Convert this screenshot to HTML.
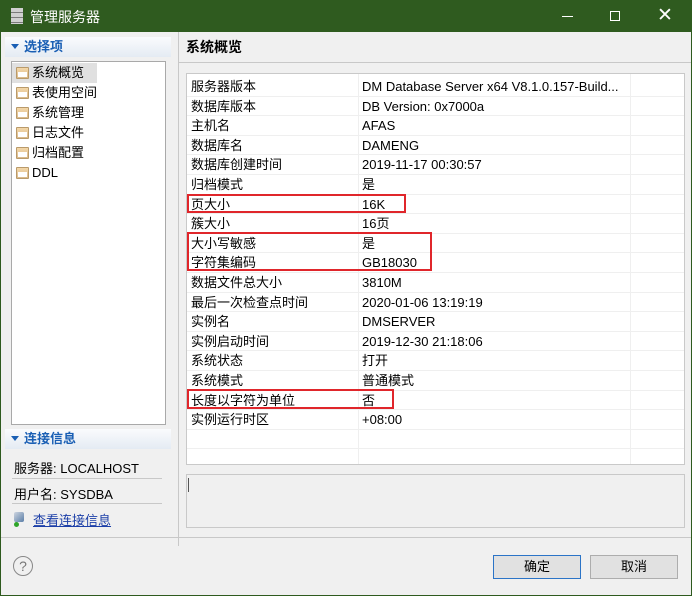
<!DOCTYPE html>
<html><head><meta charset="utf-8"><style>
*{margin:0;padding:0;box-sizing:border-box}
body{width:692px;height:596px;overflow:hidden;background:#f0f0f0;font-family:"Liberation Sans","Noto Sans CJK SC",sans-serif;font-size:13px;color:#000;position:relative}
.a{position:absolute}
.win{left:0;top:0;width:692px;height:596px;border:1px solid #2e5a1e}
.title{left:0;top:0;width:692px;height:32px;background:#2f5b1f;color:#fff}
.hdr{background:linear-gradient(#fafbfd,#e4ebf3);color:#1a5fb4;font-weight:bold;font-size:13px}
.tri{display:inline-block;width:0;height:0;border-left:4px solid transparent;border-right:4px solid transparent;border-top:5px solid #1a5fb4;margin:0 5px 2px 6px}
.list div{height:20px;line-height:20px;padding-left:20px;position:relative}
.ic{position:absolute;left:4px;top:4px;width:13px;height:12px;background:linear-gradient(#f4d7a8,#d9b98a);border:1px solid #b99a6a;border-radius:1px}
.ic:after{content:"";position:absolute;left:1px;top:4px;width:9px;height:5px;background:#fff}
.tbl{left:186px;top:73px;width:499px;height:392px;background:#fff;border:1px solid #c9c9c9}
.row{position:absolute;left:0;width:497px;height:19.6px;border-bottom:1px solid #efefef;line-height:19px}
.row span{position:absolute;left:4px}
.row b{font-weight:normal;position:absolute;left:175px}
.red{position:absolute;border:2px solid #e0262b}
.btn{background:#e1e1e1;border:1px solid #adadad;text-align:center;line-height:22px;font-size:13px}
</style></head><body>
<div class="a title">
 <div class="a" style="left:11px;top:8px;width:12px;height:16px;background:repeating-linear-gradient(#d0d0d0 0 4px,#7a7a7a 4px 5px)"></div>
 <div class="a" style="left:30px;top:7px;font-size:14px">管理服务器</div>
 <div class="a" style="left:562px;top:16px;width:11px;height:1px;background:#fff"></div>
 <div class="a" style="left:610px;top:11px;width:10px;height:10px;border:1px solid #fff"></div>
 <div class="a" style="left:657px;top:4px;font-size:19px;color:#fff">✕</div>
</div>
<div class="a" style="left:0;top:32px;width:1px;height:564px;background:#2e5a1e"></div>
<div class="a" style="left:691px;top:32px;width:1px;height:564px;background:#2e5a1e"></div>
<div class="a" style="left:0;top:595px;width:692px;height:1px;background:#2e5a1e"></div>

<div class="a hdr" style="left:5px;top:37px;width:166px;height:20px;line-height:20px"><span class="tri"></span>选择项</div>
<div class="a list" style="left:11px;top:61px;width:155px;height:364px;background:#fff;border:1px solid #a9a9a9;padding-top:1px">
 <div style="background:#e0e0e0;width:85px"><i class="ic"></i>系统概览</div>
 <div><i class="ic"></i>表使用空间</div>
 <div><i class="ic"></i>系统管理</div>
 <div><i class="ic"></i>日志文件</div>
 <div><i class="ic"></i>归档配置</div>
 <div><i class="ic"></i>DDL</div>
</div>
<div class="a hdr" style="left:5px;top:429px;width:166px;height:20px;line-height:20px"><span class="tri"></span>连接信息</div>
<div class="a" style="left:14px;top:458px">服务器: LOCALHOST</div>
<div class="a" style="left:12px;top:478px;width:150px;height:1px;background:#c8c8c8"></div>
<div class="a" style="left:14px;top:484px">用户名: SYSDBA</div>
<div class="a" style="left:12px;top:503px;width:150px;height:1px;background:#c8c8c8"></div>
<div class="a" style="left:14px;top:512px;width:10px;height:10px;background:linear-gradient(135deg,#cfd6e0,#5a7ea8);border-radius:2px"></div>
<div class="a" style="left:14px;top:522px;width:5px;height:5px;background:#2fa52a;border-radius:50%"></div>
<div class="a" style="left:33px;top:510px;color:#1c3fa8;text-decoration:underline">查看连接信息</div>

<div class="a" style="left:178px;top:32px;width:1px;height:514px;background:#c8c8c8"></div>
<div class="a" style="left:186px;top:37px;font-weight:bold;font-size:14px">系统概览</div>
<div class="a" style="left:179px;top:62px;width:512px;height:1px;background:#c8c8c8"></div>

<div class="a tbl">
 <div class="a" style="left:171px;top:0;width:1px;height:390px;background:#efefef"></div>
 <div class="a" style="left:443px;top:0;width:1px;height:390px;background:#efefef"></div>
 <div class="row" style="top:3px"><span>服务器版本</span><b>DM Database Server x64 V8.1.0.157-Build...</b></div>
 <div class="row" style="top:22.6px"><span>数据库版本</span><b>DB Version: 0x7000a</b></div>
 <div class="row" style="top:42.2px"><span>主机名</span><b>AFAS</b></div>
 <div class="row" style="top:61.8px"><span>数据库名</span><b>DAMENG</b></div>
 <div class="row" style="top:81.4px"><span>数据库创建时间</span><b>2019-11-17 00:30:57</b></div>
 <div class="row" style="top:101px"><span>归档模式</span><b>是</b></div>
 <div class="row" style="top:120.6px"><span>页大小</span><b>16K</b></div>
 <div class="row" style="top:140.2px"><span>簇大小</span><b>16页</b></div>
 <div class="row" style="top:159.8px"><span>大小写敏感</span><b>是</b></div>
 <div class="row" style="top:179.4px"><span>字符集编码</span><b>GB18030</b></div>
 <div class="row" style="top:199px"><span>数据文件总大小</span><b>3810M</b></div>
 <div class="row" style="top:218.6px"><span>最后一次检查点时间</span><b>2020-01-06 13:19:19</b></div>
 <div class="row" style="top:238.2px"><span>实例名</span><b>DMSERVER</b></div>
 <div class="row" style="top:257.8px"><span>实例启动时间</span><b>2019-12-30 21:18:06</b></div>
 <div class="row" style="top:277.4px"><span>系统状态</span><b>打开</b></div>
 <div class="row" style="top:297px"><span>系统模式</span><b>普通模式</b></div>
 <div class="row" style="top:316.6px"><span>长度以字符为单位</span><b>否</b></div>
 <div class="row" style="top:336.2px"><span>实例运行时区</span><b>+08:00</b></div>
 <div class="row" style="top:355.8px"></div>
</div>
<div class="red" style="left:187px;top:194px;width:219px;height:19px"></div>
<div class="red" style="left:187px;top:232px;width:245px;height:39px"></div>
<div class="red" style="left:187px;top:389px;width:207px;height:20px"></div>

<div class="a" style="left:186px;top:474px;width:499px;height:54px;border:1px solid #c9c9c9;background:#f0f0f0"></div>
<div class="a" style="left:188px;top:478px;width:1px;height:14px;background:#555"></div>
<div class="a" style="left:1px;top:537px;width:690px;height:1px;background:#c8c8c8"></div>

<div class="a" style="left:13px;top:556px;width:20px;height:20px;border:1px solid #888;border-radius:50%;text-align:center;line-height:18px;color:#777;font-size:14px">?</div>
<div class="a btn" style="left:493px;top:555px;width:88px;height:24px;border:1px solid #2b74c7">确定</div>
<div class="a btn" style="left:590px;top:555px;width:88px;height:24px">取消</div>
</body></html>
